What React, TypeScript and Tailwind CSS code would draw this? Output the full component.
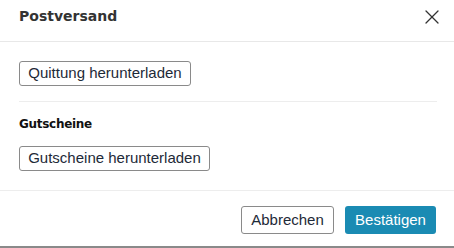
import { X } from "lucide-react";

export default function App() {
  return (
    <div className="w-[454px] h-[248px] bg-white flex flex-col border-b-2 border-[#8a8a8a] font-['Liberation_Sans',Arial,sans-serif]">
      {/* HEADER */}
      <div className="h-[42px] flex items-center justify-between pl-[19px] pr-[10px] pb-[9px] pt-[1px] border-b border-[#e8e8e8]">
        <h2 className="text-[14px] font-bold text-[#333] font-['DejaVu_Sans',Verdana,sans-serif]">
          Postversand
        </h2>
        <X size={24} strokeWidth={1.3} className="text-[#333]" />
      </div>

      {/* BODY */}
      <div className="px-[19px] pt-[19px]">
        <button className="w-[172px] h-[25px] border border-[#8a8a8a] rounded-[3px] text-[15px] text-[#1e2a38] bg-white">
          Quittung herunterladen
        </button>

        <div className="h-px bg-[#ededed] mt-[15px] mr-[-2px]" />

        <h3 className="mt-[14px] text-[12px] leading-[16px] font-bold text-[#111] font-['DejaVu_Sans',Verdana,sans-serif] tracking-[-0.3px]">
          Gutscheine
        </h3>
        <button className="mt-[14px] w-[191px] h-[25px] border border-[#8a8a8a] rounded-[3px] text-[15px] text-[#1e2a38] bg-white">
          Gutscheine herunterladen
        </button>
      </div>

      {/* FOOTER */}
      <div className="mt-auto border-t border-[#ededed] flex justify-end gap-[11px] pr-[18px] pt-[15px] pb-[12px]">
        <button className="w-[93px] h-[28px] border border-[#8a8a8a] rounded-[3px] text-[15px] text-[#1e2a38] bg-white">
          Abbrechen
        </button>
        <button className="w-[91px] h-[28px] rounded-[3px] text-[15px] text-white bg-[#1a8bb3]">
          Bestätigen
        </button>
      </div>
    </div>
  );
}
